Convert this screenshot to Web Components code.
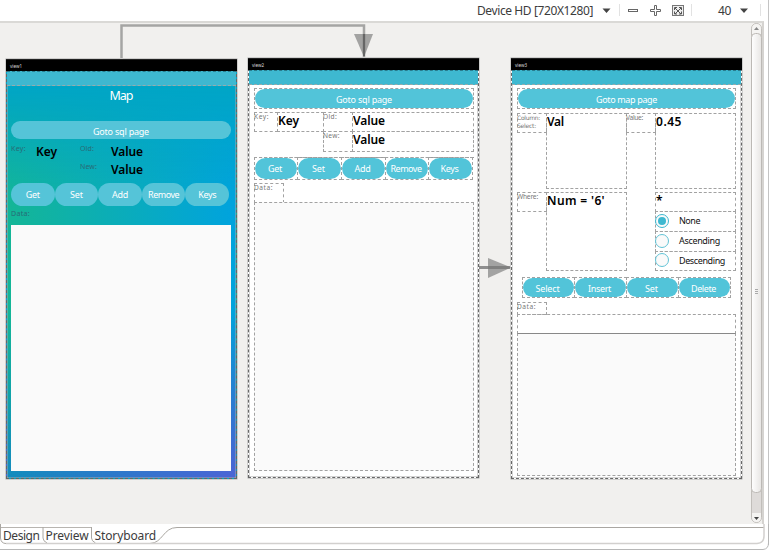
<!DOCTYPE html>
<html lang="en"><head><meta charset="utf-8"><title>Storyboard</title>
<style>
html,body{margin:0;width:770px;height:550px;overflow:hidden;background:#fff;font-family:"Noto Sans",sans-serif}
</style></head><body>
<story-editor></story-editor>
<script>
const define=(name,html,setup)=>customElements.define(name,class extends HTMLElement{
  connectedCallback(){
    if(this.shadowRoot)return;
    const t=document.createElement('template');t.innerHTML=html;
    this.attachShadow({mode:'open'}).append(t.content.cloneNode(true));
    if(setup)setup.call(this,this.shadowRoot);
  }
});

// A single-line text whose tracking is adjusted to fill the width "w".
define('fit-text','<style>:host{display:block;white-space:pre;line-height:1}span{display:inline-block}</style><span></span>',function(r){
  const s=r.querySelector('span'),str=this.getAttribute('t');s.textContent=str;
  const w=+this.getAttribute('w');
  if(w){
    const d=(w-s.getBoundingClientRect().width)/str.length;
    s.style.letterSpacing=d.toFixed(3)+'px';
  }
});

define('pill-button','<style>:host{display:flex;align-items:center;justify-content:center;box-sizing:border-box;background:#52c4d9;border-radius:12px;color:#fff;font-size:9px;padding-top:1px}</style><fit-text></fit-text>',function(r){
  const f=document.createElement('fit-text');
  f.setAttribute('t',this.getAttribute('t'));f.setAttribute('w',this.getAttribute('w'));
  r.querySelector('fit-text').replaceWith(f);
});

// Dashed designer outline around a widget; adjacent outlines share an edge.
define('edit-box','<style>:host{display:block;box-sizing:border-box;border:1px dashed #a2a2a2;margin:0 -1px -1px 0;min-width:0;min-height:0}</style><slot></slot>');

define('radio-row',`<style>:host{display:flex;align-items:center;gap:10px;font-size:9px;color:#111;height:100%}
i{box-sizing:border-box;width:14px;height:14px;border:1px solid #62c3d6;border-radius:50%;background:#fafafa;flex:none;display:grid;place-items:center;margin-left:-1px;margin-top:-2px}
::slotted(*){margin-top:-2px}
:host([on]) i{border-color:#3eb8d0}
:host([on]) i::after{content:"";width:8px;height:8px;border-radius:50%;background:#3eb8d0}</style><i></i><slot></slot>`);

define('phone-screen',`<style>
:host{position:absolute;display:flex;flex-direction:column;box-sizing:border-box;width:231px;background:#fff;border:1px dashed #666;box-shadow:inset 0 0 0 .5px #aaa,0 0 0 .5px #aaa}
header{height:11px;flex:none;background:#000;margin:-1px -1px 0;border-top:1px solid #222;box-sizing:content-box;color:#ddd;font-size:4.5px;line-height:12px;padding-left:4px}
.bar{box-sizing:border-box;height:15px;flex:none;background:#3eb8d0;border-top:1px dashed #287b8d;border-bottom:1px dashed #9aa}
main{flex:1;min-height:0;display:block}
</style><header></header><div class="bar"></div><main><slot></slot></main>`,function(r){r.querySelector('header').textContent=this.getAttribute('name')});

define('map-screen',`<style>
:host{display:block;padding:0 5px 0 4px;color:#000}
h1{margin:0;padding-top:4px;box-sizing:border-box;height:35px;font:400 12.5px "Noto Sans";color:#fff;display:flex;justify-content:center}
pill-button{background:#55c4d8}
.go{height:18px;padding-top:3px}
.fields{display:grid;grid-template-columns:25px 44px 31px 1fr;grid-template-rows:18px 18px;margin-top:5px}
.l{font-size:7px;color:#286b76;padding-top:1px}.v{font-size:12px;font-weight:600;padding-top:2px}
.btns{display:grid;grid-template-columns:repeat(5,43.6px);height:23px;margin-top:3px}
.btns pill-button{padding-top:0}
.list{background:#fafafa;height:246px;margin-top:8px}
</style><h1><fit-text t="Map" w="23"></fit-text></h1>
<pill-button class="go" t="Goto sql page" w="56"></pill-button>
<div class="fields"><fit-text class="l" t="Key:" w="15"></fit-text><fit-text class="v" t="Key" w="21"></fit-text><fit-text class="l" t="Old:" w="14"></fit-text><fit-text class="v" t="Value" w="32"></fit-text><span></span><span></span><fit-text class="l" t="New:" w="17"></fit-text><fit-text class="v" t="Value" w="32"></fit-text></div>
<div class="btns"><pill-button t="Get" w="14"></pill-button><pill-button t="Set" w="13"></pill-button><pill-button t="Add" w="16"></pill-button><pill-button t="Remove" w="31"></pill-button><pill-button t="Keys" w="18"></pill-button></div>
<fit-text class="l" style="padding-top:4px" t="Data:" w="19"></fit-text>
<div class="list"></div>`);

const boxed=`edit-box.l{font-size:6.6px;color:#777;padding:1px 0 0}edit-box.l fit-text{margin-left:-1px}edit-box.v{font-size:12px;font-weight:600;color:#000;padding:2px 0 0}`;

define('sql-screen',`<style>
:host{display:block;padding:3px 5px 0 5px}${boxed}
.go{height:21px;margin-right:-1px}.go pill-button{height:19px;padding-top:2px}
.fields{display:grid;grid-template-columns:23px 46px 29px 121px;grid-template-rows:19px 20px;margin-top:4px}
.btns{display:grid;grid-template-columns:43px 44px 44px 43px 44px;height:23px;margin-top:6px;margin-right:-1px;border:1px dashed #9a9a9a;border-width:1px 0 0;box-sizing:border-box}
.btns edit-box{padding:0;margin:-1px -1px 0 0}.btns pill-button{height:100%;padding:0 2px 0 0}
.list{background:#fafafa;height:269px}
</style><edit-box class="go"><pill-button t="Goto sql page" w="56"></pill-button></edit-box>
<div class="fields"><edit-box class="l"><fit-text t="Key:" w="15"></fit-text></edit-box><edit-box class="v"><fit-text t="Key" w="21"></fit-text></edit-box><edit-box class="l"><fit-text t="Old:" w="14"></fit-text></edit-box><edit-box class="v"><fit-text t="Value" w="32"></fit-text></edit-box><span></span><span></span><edit-box class="l"><fit-text t="New:" w="17"></fit-text></edit-box><edit-box class="v"><fit-text t="Value" w="32"></fit-text></edit-box></div>
<div class="btns"><edit-box><pill-button t="Get" w="14"></pill-button></edit-box><edit-box><pill-button t="Set" w="13"></pill-button></edit-box><edit-box><pill-button t="Add" w="16"></pill-button></edit-box><edit-box><pill-button t="Remove" w="31"></pill-button></edit-box><edit-box><pill-button t="Keys" w="18"></pill-button></edit-box></div>
<edit-box class="l" style="width:30px;height:20px;margin-top:3px"><fit-text t="Data:" w="19"></fit-text></edit-box>
<edit-box class="list"></edit-box>`);

define('query-screen',`<style>
:host{display:block;padding:3px 6px 0 5px}${boxed}
.go{height:21px}.go pill-button{height:19px}
.r{display:grid;grid-template-columns:29px 80px 29px 80px}
.r1{height:75px;margin-top:5px}.r2{height:78px;margin-top:4px}
.s{height:20px}
.two{font:6px "DejaVu Sans",sans-serif!important;padding:0!important}
.two fit-text{line-height:7.5px}
.col{display:grid;grid-template-rows:19px 20px 20px 19px}
.btns{display:grid;grid-template-columns:repeat(4,52px);height:21px;margin:7px 0 0 5px}.btns pill-button{height:100%;padding:2px 2px 0 0}
.btns edit-box{margin-bottom:0}
</style><edit-box class="go"><pill-button t="Goto map page" w="61"></pill-button></edit-box>
<div class="r r1"><edit-box class="l s two"><fit-text t="Column:" w="23"></fit-text><fit-text t="Select:" w="19"></fit-text></edit-box><edit-box class="v"><fit-text t="Val" w="17"></fit-text></edit-box><edit-box class="l s"><fit-text t="Value:" w="17"></fit-text></edit-box><edit-box class="v"><fit-text t="0.45" w="26"></fit-text></edit-box></div>
<div class="r r2"><edit-box class="l s"><fit-text t="Where:" w="21"></fit-text></edit-box><edit-box class="v"><fit-text t="Num = '6'" w="58"></fit-text></edit-box><span></span><div class="col"><edit-box class="v"><fit-text t="*"></fit-text></edit-box><edit-box><radio-row on><fit-text t="None" w="21"></fit-text></radio-row></edit-box><edit-box><radio-row><fit-text t="Ascending" w="41"></fit-text></radio-row></edit-box><edit-box><radio-row><fit-text t="Descending" w="46"></fit-text></radio-row></edit-box></div></div>
<div class="btns"><edit-box><pill-button t="Select" w="24"></pill-button></edit-box><edit-box><pill-button t="Insert" w="23"></pill-button></edit-box><edit-box><pill-button t="Set" w="13"></pill-button></edit-box><edit-box><pill-button t="Delete" w="25"></pill-button></edit-box></div>
<edit-box class="l" style="width:30px;height:13px;margin-top:4px"><fit-text t="Data:" w="19"></fit-text></edit-box>
<edit-box style="height:20px"></edit-box>
<edit-box style="height:143px;background:#fafafa;border-top:1px solid #888"></edit-box>`);

define('tool-bar',`<style>
:host{display:flex;height:21px;box-sizing:border-box;padding-left:477px;align-items:center;font-size:12px;color:#3c3c3c;background:#fff}
svg{display:block}
</style><fit-text t="Device HD [720X1280]" w="116"></fit-text>
<svg width="177" height="21" viewBox="593 0 177 21" fill="none"><path fill="#444" d="M602.5 8.5h8l-4 4.500zM740 8.500h8l-4 4.500z"/><path stroke="#e2e2e2" d="M619.5 4v12M691.5 4v12M760.5 4v12"/><rect x="628.5" y="9.5" width="9" height="2" stroke="#666"/><path stroke="#666" d="M654.5 5.500h2v4h4v2h-4v4h-2v-4h-4v-2h4z"/><rect x="672.500" y="5.500" width="11" height="10" stroke="#777" fill="#eee"/><path stroke="#555" d="M674.500 10v-2.500h2.500M679 7.500h2.500v2.500M674.500 11.500v2.500h2.500M679 14h2.500v-2.500M675 8l6 6M681 8l-6 6"/></svg>
<fit-text style="margin-left:-52px" t="40" w="13"></fit-text>`);

define('view-tabs',`<style>
:host{display:block;height:26px;position:relative;background:#fff}
svg{position:absolute;left:0;top:0}
div{position:relative;display:flex;gap:6px;padding:6px 0 0 3px;font-size:12px;color:#3c3c3c}
</style><svg width="770" height="26" viewBox="0 524 770 26" fill="none"><path stroke="#b8b5b0" d="M0 527.500H92"/><path stroke="#aaa7a2" d="M.5 524V538Q1 543.500 6 543.500M43 527v11q0 3 4 5M91.500 527v11q0 3 4 5M150 543.500C163 543 163 527.500 177 527.500H764"/><path stroke="#d2d0ce" stroke-width="1.5" d="M6 543.500H757Q764 543 764 536V524"/><path stroke="#b7b7b7" d="M0 549.500H763Q768.500 549 768.500 543V524"/></svg>
<div><fit-text t="Design" w="36.500"></fit-text><fit-text t="Preview" w="43"></fit-text><fit-text t="Storyboard" w="61.500"></fit-text></div>`);

define('scroll-bar',`<style>:host{display:block;width:11px}svg{display:block}</style>
<svg width="11" height="503" viewBox="751 22 11 503" fill="none"><defs><linearGradient id="g"><stop offset="0" stop-color="#fff"/><stop offset="1" stop-color="#e7e5e3"/></linearGradient></defs><rect x="751.500" y="24.500" width="10" height="499" rx="5" fill="#dedbd9" stroke="#c1beba"/><path fill="#f5f4f2" d="M752 36v-6q0-5 4.500-5t4.500 5v6zM752 514v4q0 5 4.500 5t4.500-5v-4z"/><rect x="751.500" y="34.500" width="10" height="459" rx="4" fill="url(#g)" stroke="#bcb9b5"/><path fill="#888" d="M754 31h5l-2.500-3z"/><path fill="#444" d="M754 518h5l-2.500 3z"/><path stroke="#aaa" d="M755 290.500h3M755 292.500h3M755 294.500h3"/></svg>`);

define('story-canvas',`<style>
:host{display:flex;justify-content:flex-end;position:relative;height:503px;background:#f1f0ee;border-top:2px solid #dad9d6;box-sizing:border-box;width:764px;border-right:2px solid #d5d3d0}
svg.links{position:absolute;left:0;top:-2px}
#a{left:6px;top:36px;height:420px;background:radial-gradient(ellipse 260px 170px at 231px 422px,#4d63d5,rgba(77,99,213,0)),linear-gradient(rgba(0,150,210,0) 60%,rgba(10,140,190,.9) 100%),linear-gradient(#00a5c6 6%,rgba(0,165,198,0) 34%),linear-gradient(90deg,#14b696,#00a3de)}
#b{left:248px;top:35px;height:420px}#c{left:511px;top:35px;height:421px}
scroll-bar{margin-top:-2px}
</style>
<phone-screen id="a" name="view1"><map-screen></map-screen></phone-screen>
<phone-screen id="b" name="view2"><sql-screen></sql-screen></phone-screen>
<phone-screen id="c" name="view3"><query-screen></query-screen></phone-screen>
<svg class="links" width="750" height="503" viewBox="0 22 750 503" fill="none"><path stroke="#a5a5a4" stroke-width="2.500" d="M121.500 59V26.500H364V58"/><path fill="#555" fill-opacity=".5" d="M354 35h19l-9 23z"/><path stroke="#666" stroke-width="2" d="M364 35v22"/><path fill="#555" fill-opacity=".5" d="M488 259v20l23-10.500z"/><path stroke="#777" stroke-opacity=".8" stroke-width="3" d="M479 268.500h31"/></svg>
<scroll-bar></scroll-bar>`);

define('story-editor',`<style>:host{display:block;width:770px;height:550px;background:linear-gradient(#c4c4c4,#c4c4c4) 768px 0/1px 545px no-repeat #fff}tool-bar{width:768px}view-tabs{background:none}</style><tool-bar></tool-bar><story-canvas></story-canvas><view-tabs></view-tabs>`);
</script></body></html>
